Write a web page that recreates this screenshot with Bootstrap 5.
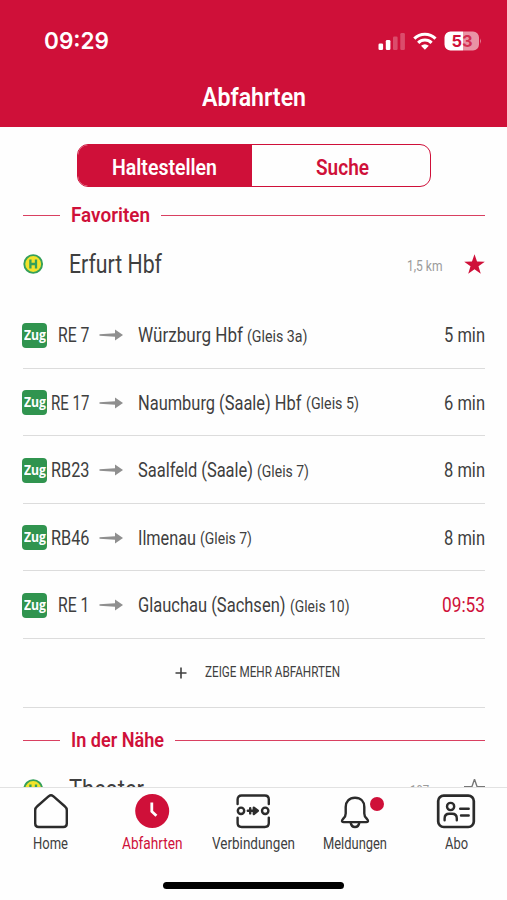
<!DOCTYPE html>
<html lang="de">
<head>
<meta charset="utf-8">
<meta name="viewport" content="width=device-width, initial-scale=1">
<title>Abfahrten</title>
<link href="https://cdn.jsdelivr.net/npm/bootstrap@5.3.0/dist/css/bootstrap.min.css" rel="stylesheet">
<style>
:root{--brand:#cf1039;--ink:#3f3f3f}
html,body{height:900px;overflow:hidden}
body{font-family:Roboto,"Liberation Sans",sans-serif;color:var(--ink);background:#fefefe;line-height:1}
svg{display:block;flex:none}
[data-w]{display:inline-block;white-space:nowrap;transform-origin:0 50%}
.app-head{height:127px;background:var(--brand);padding-top:28px}
.status{height:26px;padding:0 25px 0 44px}
.clock{font:600 23px/26px Inter,sans-serif}
.head-title{font-size:26px;line-height:30px;font-weight:600;margin-top:28px}
.segment{width:354px;height:43px;margin:17px auto 0;border:1.5px solid var(--brand);border-radius:11px;overflow:hidden;font-size:22px;font-weight:600;color:var(--brand)}
.segment>div{padding-top:4px}
.seg-on{background:var(--brand);color:#fff;width:174px}
.seg-off{padding-left:3px}
.page{padding:0 22px 0 23px}
.sec{height:30px;color:var(--brand);font-size:20.5px;font-weight:600}
.sec::before{content:"";width:37px;height:1.8px;background:var(--brand);opacity:.8;margin-right:11px}
.sec::after{content:"";flex:1;height:1.8px;background:var(--brand);opacity:.8;margin-left:11px}
.sec-a{margin-top:13.5px}
.sec-b{margin-top:18px}
.stop{height:70.5px;padding-bottom:3px}
.stop-name{font-size:25px;margin-left:25px}
.dist{font-size:14.5px;color:#9b9b9b;margin-right:22px;padding-top:5px}
.dep{height:67.5px;border-bottom:1.5px solid #dcdcdc;padding-top:2px;font-size:20.5px}
.zug{width:25px;height:25px;border-radius:4px;background:#30944f;color:#fff;font:700 15px/23px "Open Sans",sans-serif;margin-left:-1px}
.line-no{width:42.5px}
.arrow{margin:0 15px 0 9.5px}
.gleis{font-size:17px;margin-left:4px;padding-top:2px}
.late{color:var(--brand)}
.more{height:69px;border-bottom:1.5px solid #dcdcdc;font-size:15px;padding-left:152px}
.more svg{margin-right:18px}
.tabs{height:113px;border-top:1.5px solid #e2e2e2;background:#fefefe;padding-top:5px}
.tab{width:20%;height:58px;font-size:16px}
.tab svg{margin-bottom:6px}
.tab-on{color:var(--brand)}
.dot{position:absolute;width:14px;height:14px;border-radius:50%;background:var(--brand);left:66px;top:4px}
.homebar{width:181px;height:7px;border-radius:4px;background:#000;margin:31px auto 0}
.ico{fill:none;stroke:#2b2b2b;stroke-width:2.4;stroke-linecap:round;stroke-linejoin:round}
</style>
</head>
<body class="d-flex flex-column">
<svg width="0" height="0" class="position-absolute" aria-hidden="true">
  <symbol id="halt" viewBox="0 0 21 21"><circle cx="10.2" cy="10" r="8.900" fill="#f2e32b" stroke="#35a05a" stroke-width="1.900"/><path d="M7.400 5.500v9M13 5.500v9M7.400 10h5.600" fill="none" stroke="#35a05a" stroke-width="2.300"/></symbol>
  <symbol id="arr" viewBox="0 0 24 12"><path d="M.5 5.200 16 4.300V.4L24 6l-8 5.600V7.700L.5 6.800Z" fill="#8f8f8f"/></symbol>
  <symbol id="star" viewBox="0 0 20 20"><path d="M10 .2l2.400 7 7.400.1-6 4.400 2.200 7.200-6-4.300-6 4.300 2.200-7.200-6-4.400 7.400-.1Z"/></symbol>
</svg>

<header class="app-head text-white flex-shrink-0">
  <div class="status d-flex align-items-center justify-content-between">
    <div class="clock"><span data-w="65">09:29</span></div>
    <svg width="104" height="20" viewBox="0 0 104 20" fill="#fff">
      <rect x=".5" y="12.5" width="4.6" height="6.5" rx="1.3"/><rect x="7.8" y="9" width="4.6" height="10" rx="1.3"/>
      <g opacity=".25"><rect x="15" y="5.5" width="4.6" height="13.5" rx="1.3"/><rect x="22.3" y="2" width="4.6" height="17" rx="1.3"/></g>
      <g fill="none" stroke="#fff" stroke-width="3.1"><path d="M36.3 7.6a15 15 0 0 1 21.2 0"/><path d="M40.2 11.9a9.300 9.300 0 0 1 13.400 0"/></g>
      <path d="M46.9 18.8 43 14.8q3.900-3.200 7.800 0Z"/>
      <path d="M72.500 .6H85v19H72.500a6 6 0 0 1-6-6v-7a6 6 0 0 1 6-6Z"/>
      <path d="M85 .6h10a6 6 0 0 1 6 6v7a6 6 0 0 1-6 6H85ZM102.200 7.300q1.800 2.700 0 5.600Z" opacity=".55"/>
      <text x="84" y="16" text-anchor="middle" font-family="Inter" font-weight="700" font-size="16.500" fill="#cf1039"><tspan>5</tspan><tspan fill-opacity=".8">3</tspan></text>
    </svg>
  </div>
  <h1 class="head-title text-center mb-0"><span data-w="104">Abfahrten</span></h1>
</header>

<main class="flex-grow-1 overflow-hidden">
  <div class="segment d-flex">
    <div class="seg-on d-flex align-items-center justify-content-center"><span data-w="105">Haltestellen</span></div>
    <div class="seg-off flex-grow-1 d-flex align-items-center justify-content-center"><span data-w="53">Suche</span></div>
  </div>
  <div class="page">
    <div class="sec sec-a d-flex align-items-center"><span data-w="79">Favoriten</span></div>
    <div class="stop d-flex align-items-center">
      <svg width="21" height="21"><use href="#halt"/></svg>
      <div class="stop-name me-auto"><span data-w="93">Erfurt Hbf</span></div>
      <div class="dist"><span data-w="35.5">1,5 km</span></div>
      <svg width="21" height="21" fill="#cf1039"><use href="#star"/></svg>
    </div>

    <div class="dep d-flex align-items-center"><div class="zug text-center"><span data-w="22">Zug</span></div><div class="line-no text-end"><span data-w="31.5">RE 7</span></div><svg class="arrow" width="24" height="12"><use href="#arr"/></svg><span data-w="105">Würzburg Hbf</span><div class="gleis me-auto"><span data-w="60.5">(Gleis 3a)</span></div><span data-w="41">5 min</span></div>
    <div class="dep d-flex align-items-center"><div class="zug text-center"><span data-w="22">Zug</span></div><div class="line-no text-end"><span data-w="38.500">RE 17</span></div><svg class="arrow" width="24" height="12"><use href="#arr"/></svg><span data-w="163.500">Naumburg (Saale) Hbf</span><div class="gleis me-auto"><span data-w="53">(Gleis 5)</span></div><span data-w="41">6 min</span></div>
    <div class="dep d-flex align-items-center"><div class="zug text-center"><span data-w="22">Zug</span></div><div class="line-no text-end"><span data-w="38.500">RB23</span></div><svg class="arrow" width="24" height="12"><use href="#arr"/></svg><span data-w="115">Saalfeld (Saale)</span><div class="gleis me-auto"><span data-w="52">(Gleis 7)</span></div><span data-w="41">8 min</span></div>
    <div class="dep d-flex align-items-center"><div class="zug text-center"><span data-w="22">Zug</span></div><div class="line-no text-end"><span data-w="38.500">RB46</span></div><svg class="arrow" width="24" height="12"><use href="#arr"/></svg><span data-w="58">Ilmenau</span><div class="gleis me-auto"><span data-w="52">(Gleis 7)</span></div><span data-w="41">8 min</span></div>
    <div class="dep d-flex align-items-center"><div class="zug text-center"><span data-w="22">Zug</span></div><div class="line-no text-end"><span data-w="31.500">RE 1</span></div><svg class="arrow" width="24" height="12"><use href="#arr"/></svg><span data-w="147.500">Glauchau (Sachsen)</span><div class="gleis me-auto"><span data-w="59.500">(Gleis 10)</span></div><span class="late" data-w="43">09:53</span></div>

    <div class="more d-flex align-items-center">
      <svg width="12" height="12" viewBox="0 0 12 12"><path d="M6 .5v11M.5 6h11" stroke="#3f3f3f" stroke-width="1.600"/></svg>
      <span data-w="135">ZEIGE MEHR ABFAHRTEN</span>
    </div>

    <div class="sec sec-b d-flex align-items-center"><span data-w="93">In der Nähe</span></div>
    <div class="stop d-flex align-items-center">
      <svg width="21" height="21"><use href="#halt"/></svg>
      <div class="stop-name me-auto"><span data-w="75">Theater</span></div>
      <div class="dist"><span data-w="32">197 m</span></div>
      <svg width="21" height="21" fill="none" stroke="#777" stroke-width="1.300"><use href="#star"/></svg>
    </div>
  </div>
</main>

<nav class="tabs flex-shrink-0">
  <div class="d-flex">
    <div class="tab d-flex flex-column align-items-center">
      <svg class="ico" width="36" height="37" viewBox="0 0 36 37"><path d="M2.200 17.300q0-2.400 1.800-3.800L15.800 3.200q2.200-1.700 4.400 0L32 13.500q1.800 1.400 1.800 3.800v13.200q0 3.500-3.500 3.500H5.700q-3.500 0-3.500-3.500Z"/></svg>
      <span data-w="35">Home</span>
    </div>
    <div class="tab tab-on d-flex flex-column align-items-center">
      <svg width="36" height="37" viewBox="0 0 36 37"><circle cx="18.200" cy="18" r="17" fill="#cf1039"/><path d="M17.800 9.500v9l4.600 4.300" fill="none" stroke="#fff" stroke-width="2.800"/></svg>
      <span data-w="60.500">Abfahrten</span>
    </div>
    <div class="tab d-flex flex-column align-items-center">
      <svg class="ico" width="36" height="37" viewBox="0 0 36 37"><path d="M2.600 11V6.500q0-4 4-4h23.200q4 0 4 4V11M2.600 24.600V30q0 4 4 4h23.200q4 0 4-4v-5.400M12.800 17.800h6M15.200 15.200v5.200"/><circle cx="6" cy="17.800" r="3.200"/><circle cx="30.200" cy="17.800" r="3.200"/><path d="M18.800 14.600l4 3.200-4 3.200Z" fill="#2b2b2b"/></svg>
      <span data-w="83">Verbindungen</span>
    </div>
    <div class="tab d-flex flex-column align-items-center position-relative">
      <svg class="ico" width="36" height="37" viewBox="0 0 36 37"><path d="M18 4.800C12.200 4.800 8.700 8.600 8.700 14v6.500q0 3-2.300 5l-1.200 1.600q-.8 2 1.500 2h22.600q2.300 0 1.500-2l-1.200-1.600q-2.300-2-2.300-5V14c0-5.400-3.500-9.200-9.300-9.200Z"/><path d="M13.700 29.500q.6 4.500 4.300 4.500t4.300-4.500"/></svg>
      <span class="dot"></span>
      <span data-w="64">Meldungen</span>
    </div>
    <div class="tab d-flex flex-column align-items-center">
      <svg class="ico" width="40" height="37" viewBox="0 0 40 37"><rect x="2.200" y="2.600" width="35.600" height="31.400" rx="5.500" stroke-width="2.700"/><circle cx="14.600" cy="13.500" r="3.600"/><path d="M8.600 27.300v-1.800q0-4.700 4.700-4.700h2.800q4.700 0 4.700 4.700v1.800M24.200 15.800h8.500M25 22.500h7.700"/></svg>
      <span data-w="23">Abo</span>
    </div>
  </div>
  <div class="homebar"></div>
</nav>

<script src="https://cdn.jsdelivr.net/npm/bootstrap@5.3.0/dist/js/bootstrap.bundle.min.js"></script>
<script>
// Condense each label to its set width and give the saved space back to the layout.
document.querySelectorAll('[data-w]').forEach(function (el) {
  el.style.flex = 'none';
  var natural = el.getBoundingClientRect().width, w = +el.dataset.w;
  el.style.transform = 'scaleX(' + w / natural + ')';
  el.style.marginRight = (w - natural) + 'px';
});
</script>
</body>
</html>
